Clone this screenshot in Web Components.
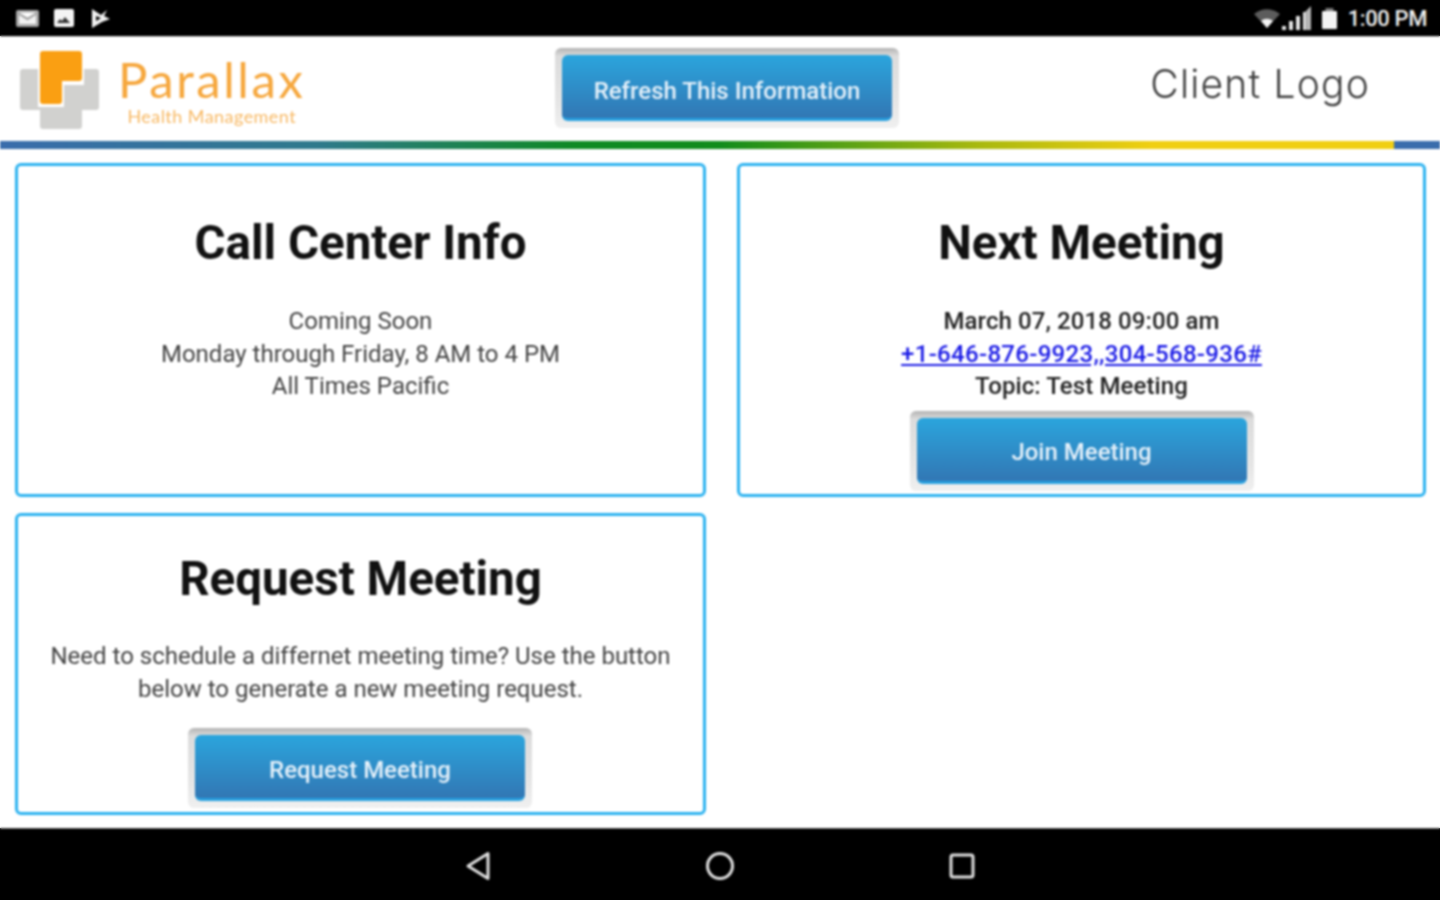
<!DOCTYPE html>
<html>
<head>
<meta charset="utf-8">
<title>Parallax Health Management</title>
<style>
  html, body { margin: 0; height: 100%; }
  body {
    font-family: Roboto, "Liberation Sans", sans-serif;
    overflow: hidden;
    background: linear-gradient(#000 36px, #fff 36px, #fff 828px, #000 828px);
  }
</style>
</head>
<body>
<app-shell>
  <status-bar></status-bar>
  <app-header></app-header>
  <color-stripe></color-stripe>
  <main-grid>
    <info-card heading="Call Center Info">
      <div>Coming Soon</div>
      <div>Monday through Friday, 8 AM to 4 PM</div>
      <div>All Times Pacific</div>
    </info-card>
    <info-card heading="Next Meeting" strong>
      <div style="letter-spacing:.1px">March 07, 2018 09:00 am</div>
      <div style="letter-spacing:.3px"><a href="tel:+16468769923" style="color:#1a1ae6">+1-646-876-9923,,304-568-936#</a></div>
      <div style="letter-spacing:.1px">Topic: Test Meeting</div>
      <blue-button slot="action">Join Meeting</blue-button>
    </info-card>
    <info-card heading="Request Meeting" compact>
      <div>Need to schedule a differnet meeting time? Use the button<br>below to generate a new meeting request.</div>
      <blue-button slot="action" style="--label-top:7px">Request Meeting</blue-button>
    </info-card>
  </main-grid>
  <nav-bar></nav-bar>
</app-shell>

<script>
class AppShell extends HTMLElement {
  constructor() {
    super();
    this.attachShadow({ mode: 'open' });
    this.shadowRoot.innerHTML = `
      <style>
        :host {
          display: flex;
          flex-direction: column;
          width: 1440px;
          height: 900px;
          filter: blur(0.8px);
        }
      </style>
      <slot></slot>
    `;
  }
}

class StatusBar extends HTMLElement {
  constructor() {
    super();
    this.attachShadow({ mode: 'open' });
    this.shadowRoot.innerHTML = `
      <style>
        :host {
          display: flex;
          align-items: center;
          height: 36px;
          flex: none;
          background: #000;
          color: #f0f0f0;
          padding: 0 13px 0 16px;
          box-sizing: border-box;
        }
        .left { display: flex; gap: 15px; align-items: center; }
        .right { margin-left: auto; display: flex; align-items: center; }
        .time { font: 500 22px Roboto, sans-serif; letter-spacing: -0.4px; margin-left: 11px; }
        svg { display: block; }
      </style>
      <div class="left">
        <svg width="23" height="17" viewBox="0 0 23 17">
          <rect width="23" height="17" rx="2" fill="#a8a8a8"/>
          <path d="M3 5v9h17V5l-8.500 5.500z" fill="#f2f2f2"/>
          <path d="M3 2.500l8.500 5 8.500-5z" fill="#fff"/>
        </svg>
        <svg width="20" height="18" viewBox="0 0 20 18">
          <rect width="20" height="18" rx="2" fill="#f4f4f4"/>
          <path d="M3 14l3-4 2 2 3-4 5 6z" fill="#333"/>
        </svg>
        <svg width="20" height="19" viewBox="0 0 20 19" style="margin-left:2px">
          <path d="M1 0l9 6 6-5-3 6 6 3-8 3-10 6z" fill="#f2f2f2"/>
          <path d="M5 7l5 2-5 3z" fill="#000"/>
        </svg>
      </div>
      <div class="right">
        <svg width="28" height="20" viewBox="0 0 28 20">
          <path d="M1 6a20 20 0 0 1 26 0L14 20z" fill="#5c5c5c"/>
          <path d="M8 13a9 9 0 0 1 12 0l-6 7z" fill="#f4f4f4"/>
        </svg>
        <svg width="31" height="26" viewBox="0 0 31 26">
          <path d="M1 25h4v-4H1zM8 25h4v-9H8zM15 25h4V11h-4zM22 25h2V7h-2z" fill="#e6e6e6"/>
          <path d="M24 25h6V1l-6 6z" fill="#b4b4b4"/>
        </svg>
        <svg width="15" height="21" viewBox="0 0 15 21" style="margin-left:10px">
          <rect x="3.500" y="0" width="8" height="3" fill="#777"/>
          <rect y="3" width="15" height="18" rx="1" fill="#f4f4f4"/>
        </svg>
        <span class="time">1:00 PM</span>
      </div>
    `;
  }
}

class BlueButton extends HTMLElement {
  constructor() {
    super();
    this.attachShadow({ mode: 'open' });
    this.shadowRoot.innerHTML = `
      <style>
        :host {
          display: block;
          width: 344px;
          height: 80px;
          box-sizing: border-box;
          padding: 7px;
          border-radius: 6px;
          background: linear-gradient(#b4b4b4 0, #dcdcdc 8px, #e6e6e6 70%, #f0f0f0 100%);
        }
        button {
          display: block;
          width: 100%;
          height: 100%;
          border: 0;
          border-bottom: 3px solid #27a0e0;
          padding: var(--label-top, 5px) 0 0;
          border-radius: 6px;
          color: #e6f1fa;
          font: 500 24px Roboto, sans-serif;
          background: linear-gradient(#2ba5dd, #3277b4);
        }
      </style>
      <button><slot></slot></button>
    `;
  }
}

class AppHeader extends HTMLElement {
  constructor() {
    super();
    this.attachShadow({ mode: 'open' });
    this.shadowRoot.innerHTML = `
      <style>
        :host {
          display: grid;
          grid-template-columns: 555px 344px 1fr;
          align-items: start;
          height: 105px;
          flex: none;
          box-sizing: border-box;
          background: #fff;
          border-top: 1px solid #ccc;
        }
        .brand { display: flex; padding: 14px 0 0 20px; }
        .words { margin-left: 18px; color: #f6a73d; font-family: Lato, "Open Sans", sans-serif; text-align: center; }
        .name { font-size: 49px; line-height: 46px; margin-top: 5px; letter-spacing: 2.6px; font-weight: 400; }
        .sub { font-size: 18px; line-height: 18px; margin-top: 5px; letter-spacing: .45px; opacity: .8; }
        blue-button { margin-top: 11px; --label-top: 9px; }
        .client {
          justify-self: end;
          padding: 21px 70px 0 0;
          font: 300 39px/52px Inter, Lato, sans-serif;
          letter-spacing: 1.2px;
          color: #3c3c3c;
        }
      </style>
      <div class="brand">
        <svg width="80" height="78" viewBox="0 0 80 78">
          <path d="M3 18h73a3 3 0 0 1 3 3v35a3 3 0 0 1-3 3H62v16a3 3 0 0 1-3 3H23a3 3 0 0 1-3-3V59H3a3 3 0 0 1-3-3V21a3 3 0 0 1 3-3z" fill="#d1d1cf"/>
          <path d="M18 0h46v34H44v22H18z" fill="#fff"/>
          <path d="M23 0h36a3 3 0 0 1 3 3v24a3 3 0 0 1-3 3H42v20a3 3 0 0 1-3 3H23a3 3 0 0 1-3-3V3a3 3 0 0 1 3-3z" fill="#fa9f12"/>
        </svg>
        <div class="words">
          <div class="name">Parallax</div>
          <div class="sub">Health Management</div>
        </div>
      </div>
      <blue-button>Refresh This Information</blue-button>
      <div class="client">Client Logo</div>
    `;
  }
}

class ColorStripe extends HTMLElement {
  constructor() {
    super();
    this.attachShadow({ mode: 'open' });
    this.shadowRoot.innerHTML = `
      <style>
        :host {
          display: block;
          flex: none;
          height: 8px;
          background: linear-gradient(90deg, #3a6dac 0, #2f7a8c 22%, #0f8a24 40%, #118c1c 50%, #a9b90e 68%, #f0cf12 80%, #f0cf12 1394px, #3a6dac 1394px);
        }
      </style>
    `;
  }
}

class MainGrid extends HTMLElement {
  constructor() {
    super();
    this.attachShadow({ mode: 'open' });
    this.shadowRoot.innerHTML = `
      <style>
        :host {
          display: grid;
          flex: 1;
          grid-template-columns: 691px 689px;
          grid-template-rows: 334px 302px;
          column-gap: 31px;
          row-gap: 16px;
          align-content: start;
          padding: 14px 0 0 15px;
          background: #fff;
        }
      </style>
      <slot></slot>
    `;
  }
}

class InfoCard extends HTMLElement {
  constructor() {
    super();
    this.attachShadow({ mode: 'open' });
    this.shadowRoot.innerHTML = `
      <style>
        :host {
          display: flex;
          flex-direction: column;
          align-items: center;
          box-sizing: border-box;
          border: 3px solid #2cb2f0;
          border-radius: 6px;
          padding-top: 49px;
          text-align: center;
          color: #444;
          font: 400 24px/32.700px Roboto, sans-serif;
        }
        :host([strong]) { color: #222; font-weight: 500; }
        :host([compact]) { padding-top: 35px; line-height: 33px; }
        h2 {
          margin: 0 0 34px;
          font: 700 47.500px/56px Roboto, sans-serif;
          color: #111;
        }
        :host([compact]) h2 { margin-bottom: 33px; }
        .action { margin-top: 8px; }
        :host([compact]) .action { margin: 22px 0 0 -1px; }
      </style>
      <h2></h2>
      <div class="body"><slot></slot></div>
      <div class="action"><slot name="action"></slot></div>
    `;
  }

  connectedCallback() {
    this.shadowRoot.querySelector('h2').textContent = this.getAttribute('heading');
  }
}

class NavBar extends HTMLElement {
  constructor() {
    super();
    this.attachShadow({ mode: 'open' });
    this.shadowRoot.innerHTML = `
      <style>
        :host {
          display: grid;
          grid-template-columns: repeat(3, 28px);
          justify-content: center;
          column-gap: 214px;
          align-items: center;
          height: 72px;
          flex: none;
          background: #000;
          border-top: 1px solid #555;
          box-sizing: border-box;
        }
        svg { display: block; margin-top: 2px; }
      </style>
      <svg width="28" height="32" viewBox="0 0 28 32"><path d="M24 3.500L4 16l20 12.500z" fill="none" stroke="#e0e0e0" stroke-width="3" stroke-linejoin="round"/></svg>
      <svg width="28" height="32" viewBox="0 0 28 32"><circle cx="14" cy="16" r="12.500" fill="none" stroke="#e0e0e0" stroke-width="3"/></svg>
      <svg width="28" height="32" viewBox="0 0 28 32"><rect x="3" y="5" width="22" height="22" rx="2" fill="none" stroke="#e0e0e0" stroke-width="3"/></svg>
    `;
  }
}

customElements.define('app-shell', AppShell);
customElements.define('status-bar', StatusBar);
customElements.define('blue-button', BlueButton);
customElements.define('app-header', AppHeader);
customElements.define('color-stripe', ColorStripe);
customElements.define('main-grid', MainGrid);
customElements.define('info-card', InfoCard);
customElements.define('nav-bar', NavBar);
</script>
</body>
</html>
